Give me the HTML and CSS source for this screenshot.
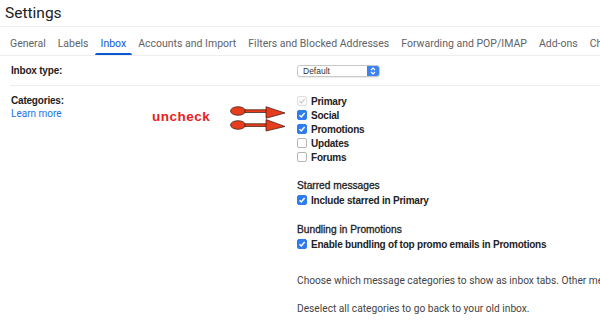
FILE: index.html
```html
<!DOCTYPE html>
<html>
<head>
<meta charset="utf-8">
<link rel="stylesheet" href="styles.css">
</head>
<body>
<div class="page">
  <header class="title-bar"><h1>Settings</h1></header>
  <nav class="tabs">
    <span class="tab">General</span>
    <span class="tab">Labels</span>
    <span class="tab active">Inbox</span>
    <span class="tab">Accounts and Import</span>
    <span class="tab">Filters and Blocked Addresses</span>
    <span class="tab">Forwarding and POP/IMAP</span>
    <span class="tab">Add-ons</span>
    <span class="tab">Chat and Meet</span>
  </nav>
  <section class="row row-type">
    <div class="label">Inbox type:</div>
    <div class="value">
      <div class="select"><span class="select-text">Default</span><span class="select-btn"><svg width="8" height="10" viewBox="0 0 8 10"><path d="M2 4 L4 2 L6 4 M2 6 L4 8 L6 6" fill="none" stroke="#fff" stroke-width="1.2"/></svg></span></div>
    </div>
  </section>
  <section class="row row-cat">
    <div class="label">
      <div>Categories:</div>
      <a class="link">Learn more</a>
    </div>
    <div class="value">
      <div class="checks">
        <div class="check"><span class="box disabled"><svg viewBox="0 0 10 10"><path d="M2.5 5.2 L4.3 7 L7.6 3" fill="none" stroke="#c4c4c4" stroke-width="1.1"/></svg></span>Primary</div>
        <div class="check"><span class="box on"><svg viewBox="0 0 10 10"><path d="M2.5 5.2 L4.3 7 L7.6 3" fill="none" stroke="#fff" stroke-width="1.5"/></svg></span>Social</div>
        <div class="check"><span class="box on"><svg viewBox="0 0 10 10"><path d="M2.5 5.2 L4.3 7 L7.6 3" fill="none" stroke="#fff" stroke-width="1.5"/></svg></span>Promotions</div>
        <div class="check"><span class="box"></span>Updates</div>
        <div class="check"><span class="box"></span>Forums</div>
      </div>
      <div class="group">
        <div class="group-title">Starred messages</div>
        <div class="check"><span class="box on"><svg viewBox="0 0 10 10"><path d="M2.5 5.2 L4.3 7 L7.6 3" fill="none" stroke="#fff" stroke-width="1.5"/></svg></span>Include starred in Primary</div>
      </div>
      <div class="group">
        <div class="group-title">Bundling in Promotions</div>
        <div class="check"><span class="box on"><svg viewBox="0 0 10 10"><path d="M2.5 5.2 L4.3 7 L7.6 3" fill="none" stroke="#fff" stroke-width="1.5"/></svg></span>Enable bundling of top promo emails in Promotions</div>
      </div>
      <p class="desc first">Choose which message categories to show as inbox tabs. Other messages will appear in the Primary tab.</p>
      <p class="desc">Deselect all categories to go back to your old inbox.</p>
    </div>
    <div class="annot">
      <span class="annot-text">uncheck</span>
      <svg class="arrows" width="60" height="30" viewBox="0 0 60 30">
        <g stroke="#3a140c" stroke-width="0.7" fill="#e63d1d">
          <ellipse cx="8" cy="7" rx="7.5" ry="4.3"/>
          <rect x="15" y="5.8" width="22" height="2.6"/>
          <path d="M36 2.7 L55 9 L36 14.3 Z"/>
          <ellipse cx="8" cy="21" rx="7.5" ry="4.3"/>
          <rect x="15" y="19.8" width="22" height="2.6"/>
          <path d="M36 15.5 L55 22.5 L36 27 Z"/>
        </g>
      </svg>
    </div>
  </section>
</div>
</body>
</html>
```

FILE: styles.css
```css
* { box-sizing: border-box; }
html, body { margin: 0; padding: 0; background: #fff; }
body { width: 600px; height: 336px; overflow: hidden; font-family: "Liberation Sans", Arial, sans-serif; color: #222; }
.page { width: 600px; }
.title-bar { height: 27px; border-bottom: 1px solid #f1f1f1; padding-left: 5px; padding-top: 2px; }
.title-bar h1 { margin: 0; font-family: "Roboto", sans-serif; font-weight: 400; font-size: 15.5px; line-height: 22px; color: #202124; }
.tabs { display: flex; height: 29px; border-bottom: 1px solid #eee; padding-left: 4px; white-space: nowrap; overflow: hidden; }
.tab { font-family: "Roboto", sans-serif; font-size: 10.5px; color: #5f6368; padding: 4px 6px 0; height: 28px; display: flex; align-items: center; position: relative; flex: none; }
.tab.active { color: #0b57d0; }
.tab.active::after { content: ""; position: absolute; left: 0; right: 0; bottom: 0; height: 2px; background: #0b57d0; border-radius: 2px 2px 0 0; }
.row { display: flex; margin: 0 0 0 10px; }
.label { width: 287px; flex: none; font-weight: bold; font-size: 10px; letter-spacing: -0.2px; color: #222; padding-left: 1px; }
.row-type { height: 30px; align-items: center; border-bottom: 1px solid #eee; }
.row-cat { padding-top: 9px; position: relative; }
.link { display: block; font-weight: normal; color: #1a73e8; font-size: 10px; letter-spacing: 0; margin-top: 2px; font-family: "Roboto", sans-serif; }
.select { width: 83px; height: 12px; border: 1px solid #c9c9c9; border-radius: 3px; display: flex; font-size: 8.5px; font-family: "Liberation Sans", sans-serif; color: #333; box-shadow: 0 1px 1px rgba(0,0,0,0.08); overflow: hidden; }
.select-text { flex: 1; padding-left: 5px; line-height: 11px; }
.select-btn { width: 12px; background: #3b83f0; display: flex; align-items: center; justify-content: center; }
.value { flex: 1; }
.check { display: flex; align-items: center; font-weight: bold; font-size: 10px; letter-spacing: -0.22px; color: #222; height: 14px; white-space: nowrap; }
.box { width: 10px; height: 10px; border: 1px solid #b5b5b5; border-radius: 2px; margin-right: 4px; background: #fff; display: flex; flex: none; }
.box svg { width: 100%; height: 100%; }
.box.on { background: #2f7cf0; border-color: #2f7cf0; }
.box.disabled { border-color: #e0e0e0; background: #fafafa; }
.box.on svg, .box.disabled svg { margin: -1px; width: 10px; height: 10px; }
.checks { margin-top: -1px; }
.group { margin-top: 15px; }
.group-title { font-size: 10.2px; color: #222; height: 14px; line-height: 14px; font-weight: normal; -webkit-text-stroke: 0.3px #222; }
.group + .group { margin-top: 16px; }
.desc { margin: 0; font-family: "Roboto", sans-serif; font-size: 10.2px; color: #444; white-space: nowrap; line-height: 14px; }
.desc.first { margin-top: 23px; }
.desc + .desc { margin-top: 14px; }
.annot { position: absolute; left: 142px; top: 14px; width: 150px; height: 32px; }
.annot-text { position: absolute; left: 0; top: 9px; font-family: "Liberation Sans", sans-serif; font-weight: bold; font-size: 13.5px; color: #e8231c; letter-spacing: 0.5px; }
.arrows { position: absolute; left: 78px; top: 4px; }
```
